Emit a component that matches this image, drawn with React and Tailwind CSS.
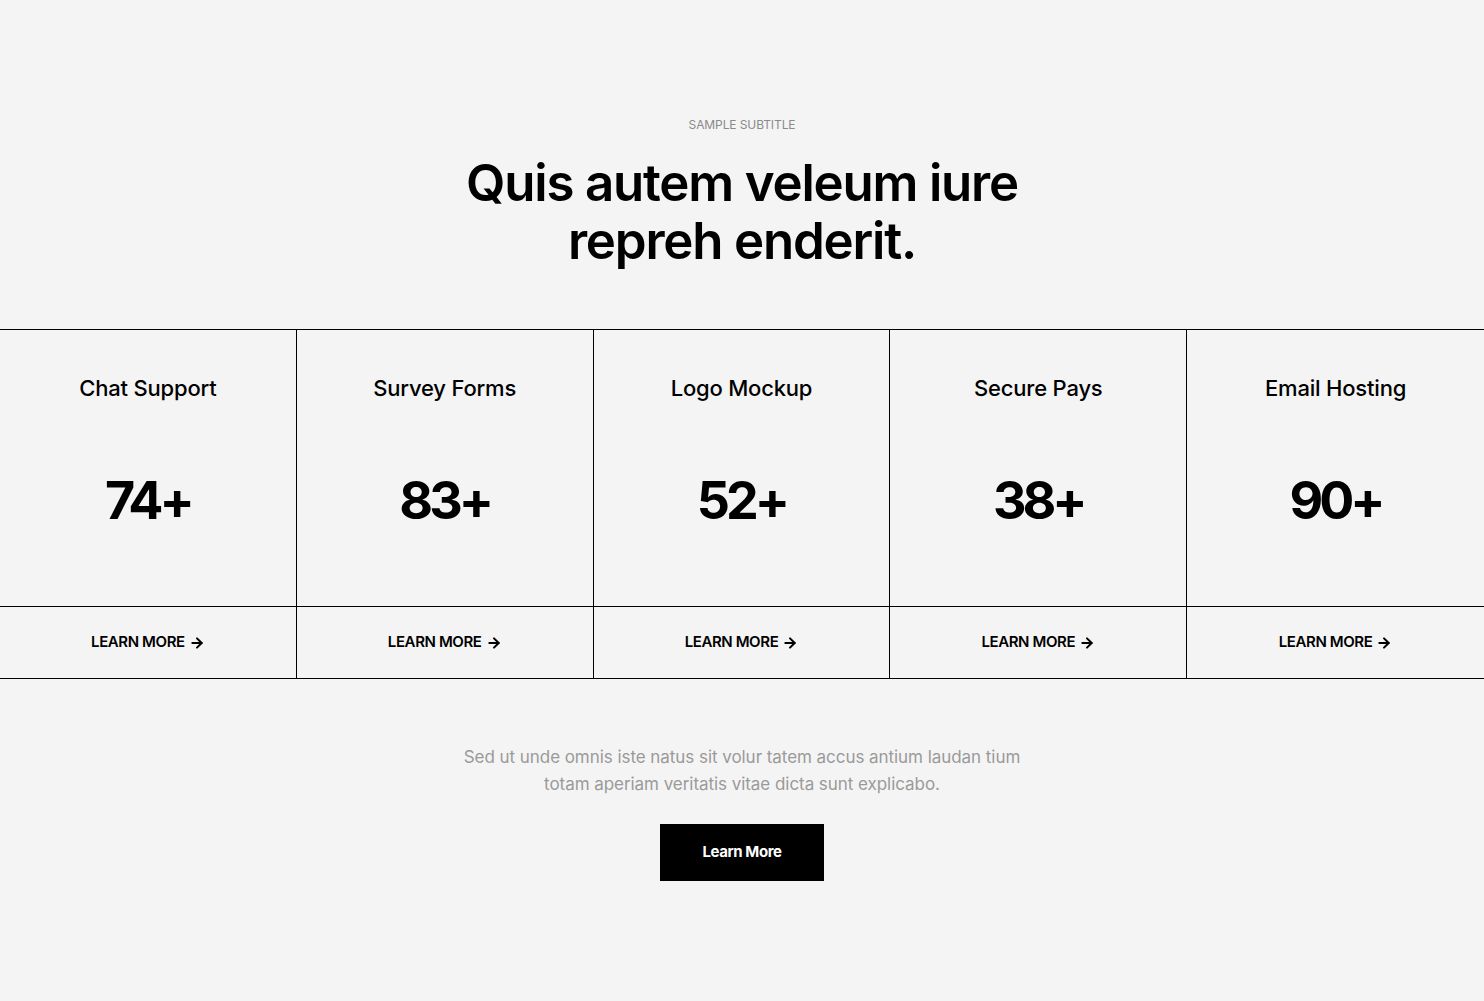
import { ArrowRight } from "lucide-react";

const stats = [
  { title: "Chat Support", value: "74+" },
  { title: "Survey Forms", value: "83+" },
  { title: "Logo Mockup", value: "52+" },
  { title: "Secure Pays", value: "38+" },
  { title: "Email Hosting", value: "90+" },
];

const App = () => {
  return (
    <div
      className="min-h-screen bg-[#f4f4f4] text-black"
      style={{ fontFamily: "Inter, 'Noto Sans', sans-serif" }}
    >
      <div className="pt-[118px] flex flex-col items-center text-center">
        <p className="text-[12px] leading-[14px] uppercase text-[#8a8a8a] tracking-[-0.1px]">
          Sample Subtitle
        </p>
        <h1 className="mt-[22px] text-[51px] leading-[58px] font-semibold tracking-[-1.2px]">
          Quis autem veleum iure
          <br />
          repreh enderit.
        </h1>
      </div>

      <div className="mt-[59px] grid grid-cols-5 border-t border-b border-black">
        {stats.map((s, i) => (
          <div
            key={s.title}
            className={i < 4 ? "border-r border-black flex flex-col" : "flex flex-col"}
          >
            <div className="h-[277px] flex flex-col items-center border-b border-black">
              <h3 className="mt-[44px] text-[22px] leading-[28px] font-medium tracking-[-0.2px]">
                {s.title}
              </h3>
              <div className="mt-[71px] text-[52px] leading-[56px] font-bold tracking-[-4px]">
                {s.value}
              </div>
            </div>
            <a
              href="#"
              className="h-[71px] flex items-center justify-center gap-[4px] text-[15px] font-semibold uppercase tracking-[-0.4px]"
            >
              Learn More
              <ArrowRight size={16} strokeWidth={3} />
            </a>
          </div>
        ))}
      </div>

      <div className="pt-[65px] pb-[120px] flex flex-col items-center text-center">
        <p className="text-[17px] leading-[27px] text-[#9a9a9a] tracking-[-0.05px]">
          Sed ut unde omnis iste natus sit volur tatem accus antium laudan tium
          <br />
          totam aperiam veritatis vitae dicta sunt explicabo.
        </p>
        <button className="mt-[26px] w-[164px] h-[57px] bg-black text-white text-[15px] font-bold tracking-[-0.4px]">
          Learn More
        </button>
      </div>
    </div>
  );
};

export default App;
